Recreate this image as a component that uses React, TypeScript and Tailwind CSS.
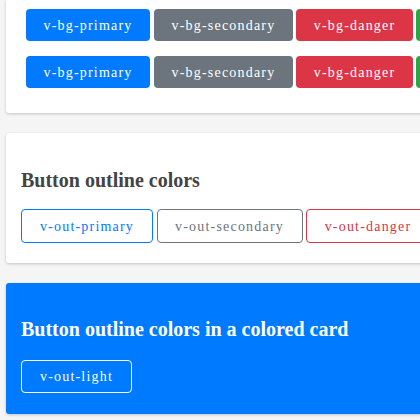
const filled = [
  { label: "v-bg-primary", cls: "bg-[#007bff] w-[124px]" },
  { label: "v-bg-secondary", cls: "bg-[#6c757d] w-[139px] ml-[4px]" },
  { label: "v-bg-danger", cls: "bg-[#dc3545] w-[117px] ml-[3px]" },
  { label: "v-bg-success", cls: "bg-[#28a745] w-[124px] ml-[3px]" },
];

const outlined = [
  { label: "v-out-primary", cls: "border-[#007bff] text-[#007bff] w-[132px]" },
  { label: "v-out-secondary", cls: "border-[#6c757d] text-[#6c757d] w-[146px]" },
  { label: "v-out-danger", cls: "border-[#dc3545] text-[#dc3545] w-[124px]" },
  { label: "v-out-success", cls: "border-[#28a745] text-[#28a745] w-[132px]" },
];

function FilledRow() {
  return (
    <div className="flex">
      {filled.map((b) => (
        <button
          key={b.label}
          className={`h-[32px] shrink-0 rounded-[4px] text-[14px] tracking-[1.2px] text-white ${b.cls}`}
        >
          {b.label}
        </button>
      ))}
    </div>
  );
}

export default function App() {
  return (
    <div
      className="w-[420px] h-[420px] overflow-hidden bg-[#f5f5f5]"
      style={{ fontFamily: '"Liberation Serif", "Times New Roman", serif' }}
    >
      <div className="w-[700px] pl-[6px] flex flex-col gap-[20px]">
        <div className="bg-white rounded-b-[3px] shadow-[0_1px_3px_rgba(0,0,0,0.2)] pl-[20px] pt-[9px] pb-[25px] flex flex-col gap-[15px]">
          <FilledRow />
          <FilledRow />
        </div>

        <div className="bg-white rounded-[3px] shadow-[0_1px_3px_rgba(0,0,0,0.2)] px-[15px] pt-[35px] pb-[20px]">
          <h2 className="text-[20px] leading-[24px] font-bold text-[#444]">Button outline colors</h2>
          <div className="flex gap-[3.5px] mt-[17px]">
            {outlined.map((b) => (
              <button
                key={b.label}
                className={`h-[34px] shrink-0 rounded-[4px] border bg-white text-[14px] tracking-[1.2px] ${b.cls}`}
              >
                {b.label}
              </button>
            ))}
          </div>
        </div>

        <div className="bg-[#007bff] rounded-[3px] shadow-[0_1px_3px_rgba(0,0,0,0.2)] px-[15px] pt-[34px] pb-[21px]">
          <h2 className="text-[20px] leading-[24px] font-bold text-white">
            Button outline colors in a colored card
          </h2>
          <button className="mt-[19px] h-[33px] w-[111px] rounded-[4px] border border-white text-[14px] tracking-[1.2px] text-white">
            v-out-light
          </button>
        </div>
      </div>
    </div>
  );
}
